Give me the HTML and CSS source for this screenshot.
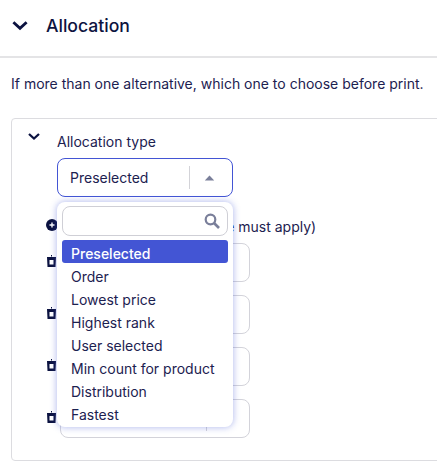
FILE: index.html
```html
<!DOCTYPE html>
<html lang="en">
<head>
<meta charset="utf-8">
<title>Allocation</title>
<link rel="stylesheet" href="styles.css">
</head>
<body>
<header class="head">
  <svg class="chev-lg" viewBox="0 0 16 10"><path d="M2 2l6 5.500L14 2" fill="none" stroke="#0b1240" stroke-width="2.600"/></svg>
  <h1>Allocation</h1>
</header>
<p class="intro">If more than one alternative, which one to choose before print.</p>
<section class="card">
  <svg class="chev-sm" viewBox="0 0 14 9"><path d="M2 2l5 4.500L12 2" fill="none" stroke="#0b1240" stroke-width="2.300"/></svg>
  <div class="body">
    <label class="lbl">Allocation type</label>
    <div class="select">
      <span class="sel-val">Preselected</span>
      <span class="sel-div"></span>
      <svg class="caret" viewBox="0 0 12 7"><path d="M6 .5L11.500 6.500H.5z" fill="#7a7f9a"/></svg>
    </div>
    <div class="addrow">
      <svg class="ico-add" viewBox="0 0 12 12"><circle cx="6" cy="6" r="6" fill="#0b1240"/><path d="M3.500 6h5M6 3.500v5" stroke="#fff" stroke-width="1.400"/></svg>
      <span class="add-text">Alternatives (at least one must apply)</span>
    </div>
    <div class="rows">
      <div class="row"><svg class="ico-del" viewBox="0 0 9 12"><path d="M4 0h1v1.500H4zM0 2h9l-.5 10H.5z" fill="#0b1240"/><path d="M2.500 5h4v4.500h-4z" fill="#fff"/></svg><div class="field"><span class="fdiv"></span></div></div>
      <div class="row"><svg class="ico-del" viewBox="0 0 9 12"><path d="M4 0h1v1.500H4zM0 2h9l-.5 10H.5z" fill="#0b1240"/><path d="M2.500 5h4v4.500h-4z" fill="#fff"/></svg><div class="field"><span class="fdiv"></span></div></div>
      <div class="row"><svg class="ico-del" viewBox="0 0 9 12"><path d="M4 0h1v1.500H4zM0 2h9l-.5 10H.5z" fill="#0b1240"/><path d="M2.500 5h4v4.500h-4z" fill="#fff"/></svg><div class="field"><span class="fdiv"></span></div></div>
      <div class="row"><svg class="ico-del" viewBox="0 0 9 12"><path d="M4 0h1v1.500H4zM0 2h9l-.5 10H.5z" fill="#0b1240"/><path d="M2.500 5h4v4.500h-4z" fill="#fff"/></svg><div class="field"><span class="fdiv"></span></div></div>
    </div>
    <div class="menu">
      <div class="search">
        <svg class="mag" viewBox="0 0 16 16"><circle cx="6.500" cy="6.500" r="4.800" fill="none" stroke="#7a7f9a" stroke-width="2.200"/><path d="M10 10l5 5" stroke="#7a7f9a" stroke-width="2.600"/></svg>
      </div>
      <ul class="opts">
        <li class="on">Preselected</li>
        <li>Order</li>
        <li>Lowest price</li>
        <li>Highest rank</li>
        <li>User selected</li>
        <li>Min count for product</li>
        <li>Distribution</li>
        <li>Fastest</li>
      </ul>
    </div>
  </div>
</section>
</body>
</html>
```
FILE: styles.css
```css
* { box-sizing: border-box; }
html, body { margin: 0; height: 100%; overflow: hidden; }
body { width: 437px; height: 472px; background: #fff; font-family: Inter, "Liberation Sans", sans-serif; font-size: 14px; color: #1c2150; }
.head { display: flex; align-items: center; height: 58px; padding: 0 0 6px 11px; border-bottom: 2px solid #e4e4e6; }
.chev-lg { width: 18px; height: 11px; display: block; }
.head h1 { margin: 2px 0 0 17px; font-size: 17.600px; font-weight: 500; color: #0d1340; line-height: 20px; }
.intro { margin: 0; padding: 18px 0 0 11px; line-height: 16px; height: 60px; white-space: nowrap; }
.card { display: flex; width: 440px; height: 343px; margin-left: 11px; padding: 13px 0 0 15px; border: 1px solid #dcdce0; border-radius: 4px; }
.chev-sm { width: 14px; height: 9px; display: block; flex: none; }
.body { position: relative; margin-left: 16px; padding-top: 1px; }
.lbl { display: block; line-height: 18px; }
.select { display: flex; align-items: center; width: 176px; height: 39px; margin-top: 7px; border: 1px solid #4355d4; border-radius: 8px; padding: 0 17px 0 12px; }
.sel-val { flex: 1; }
.sel-div { width: 1px; height: 23px; background: #d3d3d8; }
.caret { width: 11px; height: 6px; margin-left: 14px; display: block; }
.addrow { display: flex; align-items: center; height: 16px; margin: 20px 0 0 -11px; white-space: nowrap; }
.ico-add { width: 12px; height: 12px; flex: none; margin-right: 4px; }
.add-text { margin-left: 8px; margin-top: 2px; }
.rows { display: flex; flex-direction: column; gap: 13px; margin-top: 10px; margin-left: -12px; }
.row { display: flex; align-items: center; }
.ico-del { width: 9px; height: 12px; flex: none; margin: -3px 0 0 2px; }
.field { position: relative; width: 190px; height: 39px; margin-left: 4px; border: 1px solid #d3d3da; border-radius: 8px; }
.fdiv { position: absolute; left: 145px; top: 8px; height: 23px; width: 1px; background: #d3d3d8; }
.menu { position: absolute; left: 0; top: 70px; width: 176px; height: 225px; padding: 4px 5px; background: #fff; border-radius: 8px; box-shadow: 0 0 6px 1px rgba(67, 85, 212, .35); }
.search { display: flex; align-items: center; justify-content: flex-end; height: 30px; padding-right: 7px; border: 1px solid #cfcfd6; border-radius: 8px; }
.mag { width: 16px; height: 16px; display: block; }
.opts { list-style: none; margin: 4px 0 0; padding: 0; }
.opts li { height: 23px; line-height: 27px; padding-left: 9px; white-space: nowrap; }
.opts .on { background: #4355d4; color: #fff; font-weight: 500; border-radius: 3px; }
```
